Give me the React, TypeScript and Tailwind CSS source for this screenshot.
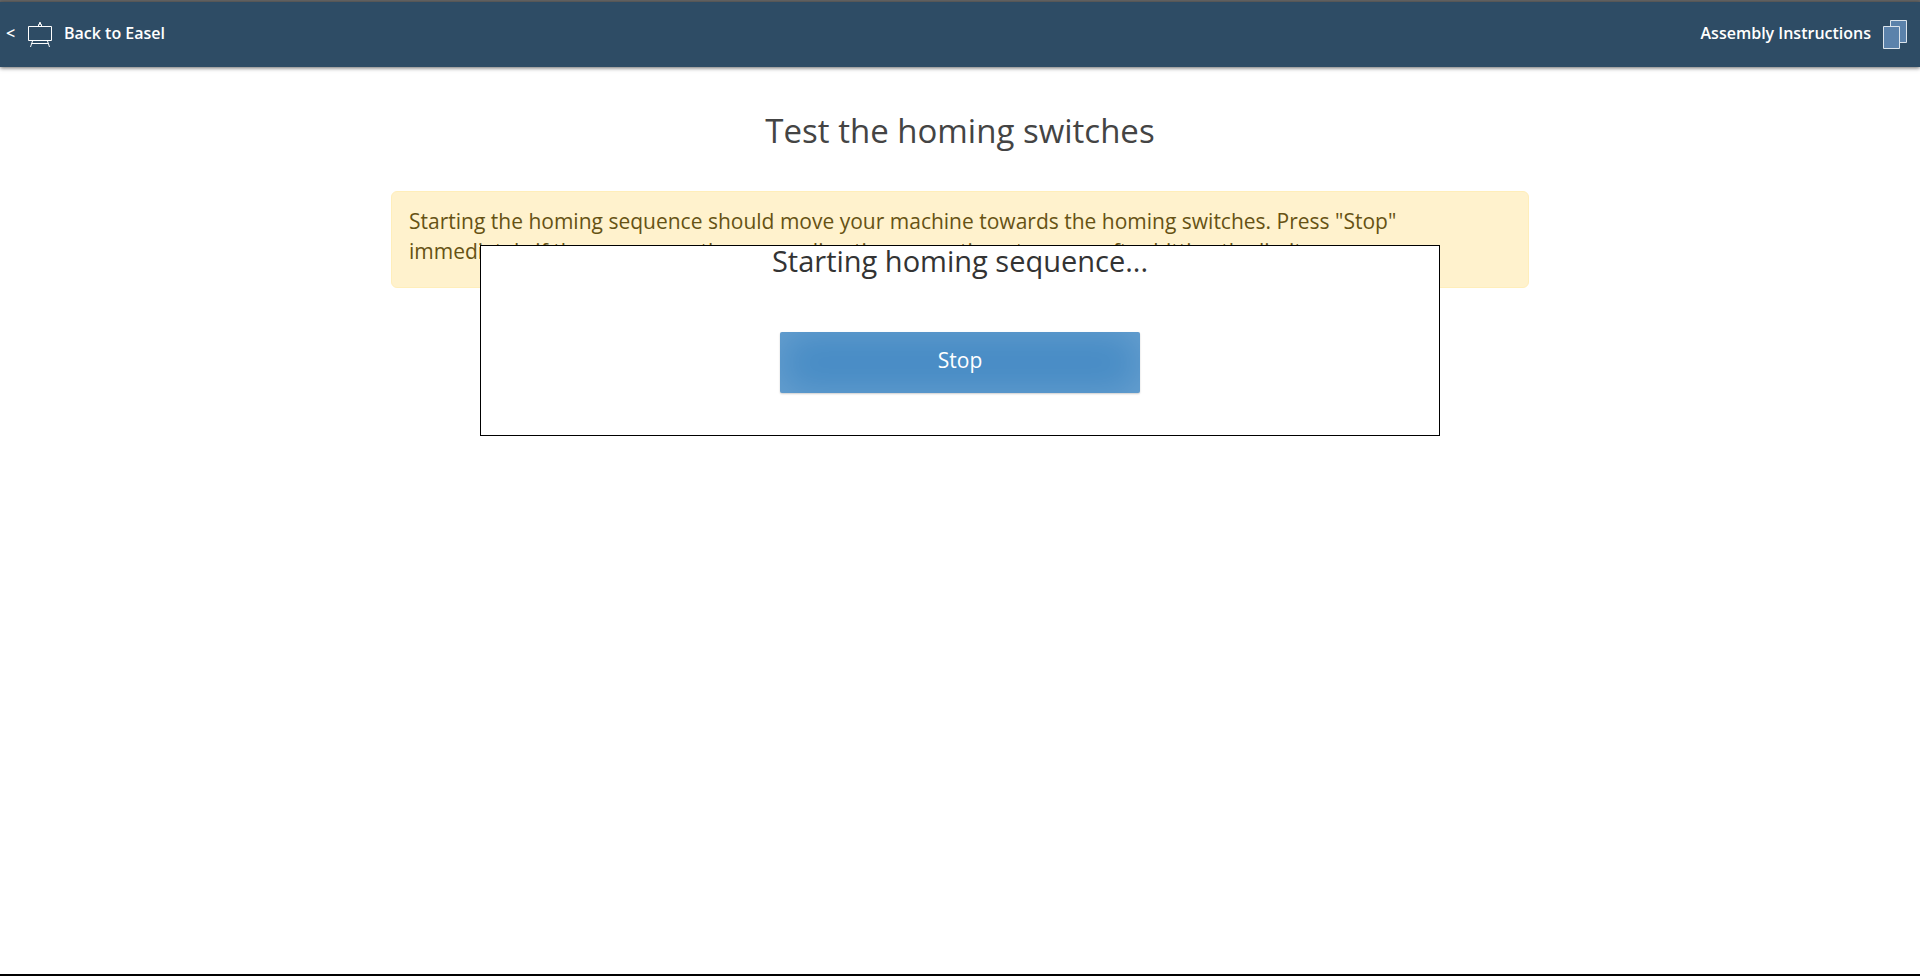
export default function App() {
  return (
    <div className="flex min-h-screen flex-col border-t-2 border-b-2 border-t-[#666666] border-b-black bg-white font-['Open_Sans','Noto_Sans',sans-serif] text-[#444444]">
      <header className="flex h-[65px] items-center justify-between bg-[#2e4c65] pr-[13px] pl-1.5 text-base font-semibold text-white shadow-[0_1px_4px_rgba(0,0,0,0.6)]">
        <a href="#easel" className="flex items-center">
          <span className="w-[22px] pb-1">&lt;</span>
          <svg width="24" height="27" viewBox="0 0 24 27" fill="none" stroke="white" className="mr-3">
            <path d="M.5 5.5h23v14H.5z" />
            <path d="M10.5 5V3.5h1V1.5h1v2h1V5M4.5 20l-2 6M19.5 20l2 6M3.5 22.5h17" />
          </svg>
          <span className="pb-1">Back to Easel</span>
        </a>
        <a href="#instructions" className="flex items-center gap-3">
          <span className="pb-1">Assembly Instructions</span>
          <svg width="24" height="29" viewBox="0 0 24 29" fill="#5b82ab" stroke="#dbe4ec">
            <path d="M7.5.5h16v22h-16z" />
            <path d="M.5 6.5h16v22H.5z" />
          </svg>
        </a>
      </header>
      <main className="mx-auto w-full max-w-[1138px]">
        <h1 className="pt-10 text-center text-[33px] leading-[48px]">Test the homing switches</h1>
        <div className="mt-9 rounded-md border border-[#ffeeba] bg-[#fff2cd] px-[17px] pt-[14px] pb-[21px] text-[21px] leading-[30px] text-[#665214]">
          <p>
            Starting the homing sequence should move your machine towards the homing switches. Press "Stop"
            <br />
            immediately if the axes move the wrong direction or continue to move after hitting the limit.
          </p>
        </div>
      </main>
      <section
        role="dialog"
        aria-labelledby="dialog-title"
        className="absolute inset-x-1/4 top-[245px] flex flex-col items-center border border-black bg-white pb-[42px]"
      >
        <h2 id="dialog-title" className="text-[29px] leading-[30px] text-[#333333]">Starting homing sequence...</h2>
        <button className="mt-14 h-[61px] w-[360px] rounded-xs bg-[#468bc5] pb-1 text-[21px] text-white shadow-[inset_0_0_40px_rgba(255,255,255,0.2),0_1px_2px_rgba(0,0,0,0.2)]">
          Stop
        </button>
      </section>
    </div>
  );
}
